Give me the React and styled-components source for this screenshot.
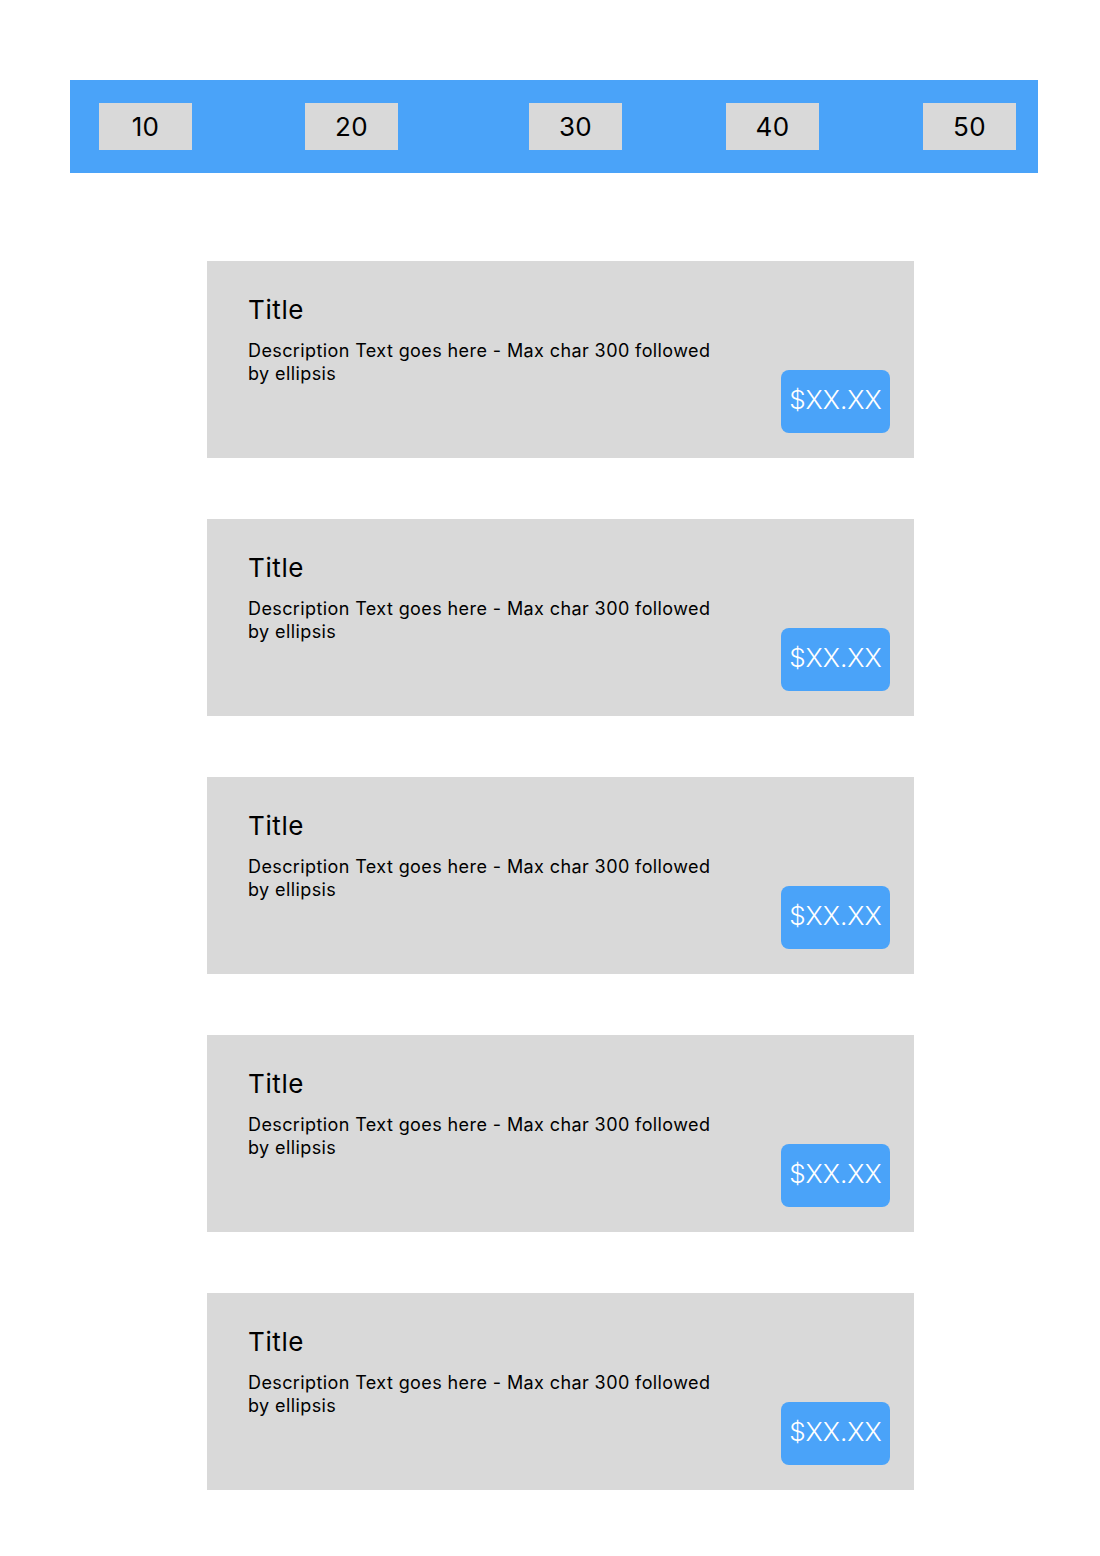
import React from 'react';
import styled, { createGlobalStyle } from 'styled-components';

const GlobalStyle = createGlobalStyle`
body {
  margin: 0;
  background: #ffffff;
  font-family: Inter, "Noto Sans", sans-serif;
  color: #000000;
}
`

const Page = styled.div`
display: flex;
flex-direction: column;
align-items: flex-start;
padding: 80px 0 66px 70px;
`

const AmountBar = styled.div`
display: flex;
align-items: center;
box-sizing: border-box;
width: 968px;
height: 93px;
padding-left: 29px;
background-color: #4aa3f9;
`

const AmountButton = styled.div`
display: flex;
align-items: center;
justify-content: center;
width: 93px;
height: 47px;
margin-left: ${props => props.$offset}px;
background-color: #d9d9d9;
font-size: 26px;
letter-spacing: 0.3px;
`

const CardList = styled.div`
display: flex;
flex-direction: column;
gap: 61px;
margin-top: 88px;
margin-left: 137px;
`

const Card = styled.div`
display: flex;
justify-content: space-between;
box-sizing: border-box;
width: 707px;
height: 197px;
padding: 32px 24px 25px 41px;
background-color: #d9d9d9;
`

const CardText = styled.div`
display: flex;
flex-direction: column;
`

const Title = styled.div`
font-size: 26px;
line-height: 34px;
letter-spacing: 0.6px;
`

const Description = styled.div`
width: 470px;
margin-top: 12px;
font-size: 18px;
line-height: 23px;
letter-spacing: 0.4px;
`

const PriceButton = styled.div`
display: flex;
align-items: center;
justify-content: center;
align-self: flex-end;
box-sizing: border-box;
width: 109px;
height: 63px;
padding-bottom: 5px;
border-radius: 8px;
background-color: #4aa3f9;
color: #ffffff;
font-size: 26px;
font-weight: 300;
`

const amounts = [
  { value: 10, offset: 0 },
  { value: 20, offset: 113 },
  { value: 30, offset: 131 },
  { value: 40, offset: 104 },
  { value: 50, offset: 104 },
]

const cards = [1, 2, 3, 4, 5]

function App() {
  return (
    <Page>
      <GlobalStyle />
      <AmountBar>
        {amounts.map(a => (
          <AmountButton key={a.value} $offset={a.offset}>{a.value}</AmountButton>
        ))}
      </AmountBar>
      <CardList>
        {cards.map(id => (
          <Card key={id}>
            <CardText>
              <Title>Title</Title>
              <Description>Description Text goes here - Max char 300 followed by ellipsis</Description>
            </CardText>
            <PriceButton>$XX.XX</PriceButton>
          </Card>
        ))}
      </CardList>
    </Page>
  );
}

export default App;
